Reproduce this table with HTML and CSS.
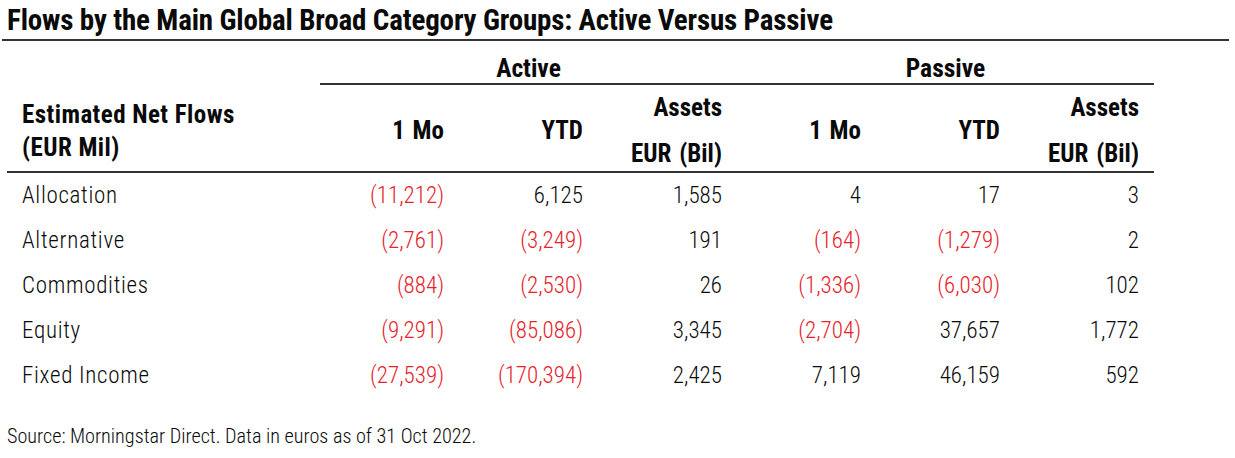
FILE: index.html
```html
<!DOCTYPE html>
<html>
<head>
<meta charset="utf-8">
<link rel="stylesheet" href="styles.css">
</head>
<body>
<h1 class="title">Flows by the Main Global Broad Category Groups: Active Versus Passive</h1>
<div class="grid">
  <div class="blank"></div>
  <div class="group">Active</div>
  <div class="group">Passive</div>

  <div class="hd label"><span>Estimated Net Flows</span><span class="sub">(EUR Mil)</span></div>
  <div class="hd num">1 Mo</div>
  <div class="hd num">YTD</div>
  <div class="hd num two"><span>Assets</span><span>EUR (Bil)</span></div>
  <div class="hd num">1 Mo</div>
  <div class="hd num">YTD</div>
  <div class="hd num two"><span>Assets</span><span>EUR (Bil)</span></div>

  <div class="c name">Allocation</div>
  <div class="c neg">(11,212)</div>
  <div class="c">6,125</div>
  <div class="c">1,585</div>
  <div class="c">4</div>
  <div class="c">17</div>
  <div class="c">3</div>

  <div class="c name">Alternative</div>
  <div class="c neg">(2,761)</div>
  <div class="c neg">(3,249)</div>
  <div class="c">191</div>
  <div class="c neg">(164)</div>
  <div class="c neg">(1,279)</div>
  <div class="c">2</div>

  <div class="c name">Commodities</div>
  <div class="c neg">(884)</div>
  <div class="c neg">(2,530)</div>
  <div class="c">26</div>
  <div class="c neg">(1,336)</div>
  <div class="c neg">(6,030)</div>
  <div class="c">102</div>

  <div class="c name">Equity</div>
  <div class="c neg">(9,291)</div>
  <div class="c neg">(85,086)</div>
  <div class="c">3,345</div>
  <div class="c neg">(2,704)</div>
  <div class="c">37,657</div>
  <div class="c">1,772</div>

  <div class="c name">Fixed Income</div>
  <div class="c neg">(27,539)</div>
  <div class="c neg">(170,394)</div>
  <div class="c">2,425</div>
  <div class="c">7,119</div>
  <div class="c">46,159</div>
  <div class="c">592</div>
</div>
<p class="source">Source: Morningstar Direct. Data in euros as of 31 Oct 2022.</p>
</body>
</html>
```
FILE: styles.css
```css
html, body {
  margin: 0;
  padding: 0;
  background: #fff;
}
body {
  font-family: Roboto, "Liberation Sans", sans-serif;
  font-stretch: 75%;
  color: #0a0a0a;
  width: 1235px;
}
.title {
  margin: 0 6px 0 2px;
  padding: 3px 0 0 5px;
  height: 41px;
  box-sizing: border-box;
  font-size: 29px;
  line-height: 34px;
  letter-spacing: -0.15px;
  font-weight: bold;
  border-bottom: 2px solid #333;
}
.grid {
  display: grid;
  grid-template-columns: 313px repeat(6, 139px);
  margin-left: 7px;
  width: 1147px;
}
.blank {
  height: 44px;
}
.group {
  grid-column: span 3;
  height: 44px;
  box-sizing: border-box;
  border-bottom: 2px solid #333;
  text-align: center;
  font-weight: bold;
  font-size: 25.5px;
  line-height: 26px;
  padding-top: 14px;
}
.hd {
  height: 88px;
  box-sizing: border-box;
  border-bottom: 2px solid #333;
  font-weight: bold;
  font-size: 25px;
  display: flex;
  flex-direction: column;
  justify-content: center;
}
.hd.label {
  padding-left: 15px;
  line-height: 33px;
  padding-top: 6px;
  letter-spacing: 0.45px;
}
.hd.num {
  align-items: flex-end;
  padding-right: 15px;
  line-height: 46px;
  padding-top: 6px;
  word-spacing: 2px;
}
.c {
  font-size: 23px;
  font-weight: 300;
  line-height: 45px;
  text-align: right;
  padding-right: 15px;
  font-variant-numeric: tabular-nums;
  letter-spacing: 0;
}
.c.name {
  text-align: left;
  padding-left: 15px;
  padding-right: 0;
  letter-spacing: 0.7px;
}
.neg {
  color: #e6222b;
}
.source {
  margin: 26px 0 0 7px;
  font-size: 20.2px;
  font-weight: 300;
  line-height: 24px;
}
```
